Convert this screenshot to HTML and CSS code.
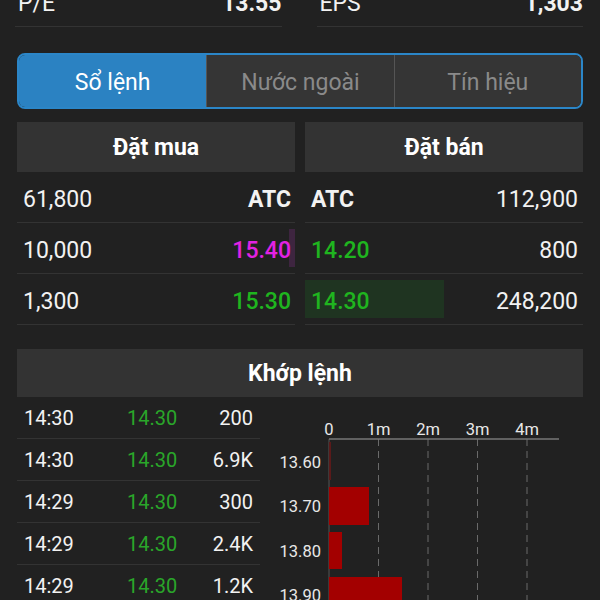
FILE: index.html
```html
<html lang="vi">
<head>
    <meta charset="UTF-8">
    <title>Sổ lệnh</title>
    <link rel="stylesheet" href="styles.css">
</head>

<body>

  <div class="stats">
    <div class="stat"><span>P/E</span><b>13.55</b></div>
    <div class="stat"><span>EPS</span><b>1,303</b></div>
  </div>

  <div class="tabs">
    <div class="tab tab-active">Sổ lệnh</div>
    <div class="tab">Nước ngoài</div>
    <div class="tab">Tín hiệu</div>
  </div>

  <div class="book">
    <div class="side">
      <div class="head">Đặt mua</div>
      <div class="row"><span>61,800</span><b>ATC</b></div>
      <div class="row"><span>10,000</span><span class="price ceil">15.40</span><i class="bar bar-buy" style="width:6px"></i></div>
      <div class="row"><span>1,300</span><span class="price up">15.30</span></div>
    </div>
    <div class="side">
      <div class="head">Đặt bán</div>
      <div class="row"><b>ATC</b><span>112,900</span></div>
      <div class="row"><span class="price up">14.20</span><span>800</span></div>
      <div class="row"><span class="price up">14.30</span><span>248,200</span><i class="bar bar-sell" style="width:139px"></i></div>
    </div>
  </div>

  <div class="head match-head">Khớp lệnh</div>

  <div class="match">
    <div class="ticks">
      <div class="tick"><span>14:30</span><span class="up">14.30</span><span class="vol">200</span></div>
      <div class="tick"><span>14:30</span><span class="up">14.30</span><span class="vol">6.9K</span></div>
      <div class="tick"><span>14:29</span><span class="up">14.30</span><span class="vol">300</span></div>
      <div class="tick"><span>14:29</span><span class="up">14.30</span><span class="vol">2.4K</span></div>
      <div class="tick"><span>14:29</span><span class="up">14.30</span><span class="vol">1.2K</span></div>
    </div>

    <svg class="chart" width="323" height="204" viewBox="0 0 323 204">
      <g class="grid">
        <line x1="69" y1="42" x2="69" y2="204" class="axis-y"/>
        <line x1="118.5" y1="42" x2="118.5" y2="204"/>
        <line x1="168" y1="42" x2="168" y2="204"/>
        <line x1="217.5" y1="42" x2="217.5" y2="204"/>
        <line x1="267" y1="42" x2="267" y2="204"/>
      </g>
      <line x1="69" y1="42" x2="299" y2="42" class="axis"/>
      <g class="xlabels">
        <text x="69" y="38">0</text>
        <text x="118.5" y="38">1m</text>
        <text x="168" y="38">2m</text>
        <text x="217.5" y="38">3m</text>
        <text x="267" y="38">4m</text>
      </g>
      <g class="bars">
        <rect x="69" y="45" width="2" height="38" class="tiny"/>
        <rect x="69" y="90" width="40" height="38"/>
        <rect x="69" y="135" width="13" height="37"/>
        <rect x="69" y="180" width="73" height="38"/>
      </g>
      <g class="ylabels">
        <text x="61" y="71">13.60</text>
        <text x="61" y="115">13.70</text>
        <text x="61" y="160">13.80</text>
        <text x="61" y="204">13.90</text>
      </g>
    </svg>
  </div>

</body>
</html>
```

FILE: styles.css
```css
* {
	box-sizing: border-box;
}
body {
	margin: 0;
	padding: 0 17px;
	background: #212121;
	color: #f2f2f2;
	font-family: Roboto, "Noto Sans", sans-serif;
	overflow: hidden;
}

.stats {
	display: grid;
	grid-template-columns: 1fr 1fr;
	column-gap: 35px;
	margin: -9px 0 0 -2px;
}
.stat {
	display: flex;
	justify-content: space-between;
	font-size: 23px;
	line-height: 26px;
	padding-bottom: 9px;
	border-bottom: 1px solid #333;
}
.stat span {
	padding-left: 3px;
}
.stat b {
	font-weight: 700;
}

.tabs {
	display: grid;
	grid-template-columns: 1fr 1fr 1fr;
	margin-top: 26px;
	height: 56px;
	border: 2px solid #2b86c8;
	border-radius: 8px;
	overflow: hidden;
}
.tab {
	display: flex;
	align-items: center;
	justify-content: center;
	padding-top: 3px;
	background: #353535;
	color: #8a8a8a;
	font-size: 23px;
	border-left: 1px solid #555;
}
.tab-active {
	background: #2b82c2;
	color: #fff;
	border-left: none;
}

.book {
	display: grid;
	grid-template-columns: 1fr 1fr;
	column-gap: 10px;
	margin-top: 13px;
}
.head {
	height: 50px;
	display: flex;
	align-items: center;
	justify-content: center;
	background: #333;
	color: #fff;
	font-size: 23px;
	font-weight: 700;
}
.row {
	position: relative;
	display: flex;
	align-items: center;
	justify-content: space-between;
	height: 51px;
	padding: 4px 4px 0 6px;
	border-bottom: 1px solid #333;
	font-size: 23px;
}
.side + .side .row {
	padding: 4px 5px 0 6px;
}
.row span, .row b {
	position: relative;
	z-index: 1;
}
.row .price {
	font-weight: 500;
}
.bar {
	position: absolute;
	top: 6px;
	bottom: 6px;
}
.bar-buy {
	right: 0;
	background: #3e2540;
}
.bar-sell {
	left: 0;
	background: #1f3421;
}
.up {
	color: #1fb51f;
}
.ceil {
	color: #e322e3;
}

.match-head {
	margin-top: 24px;
	height: 48px;
}
.match {
	display: flex;
}
.ticks {
	width: 243px;
}
.tick {
	display: grid;
	grid-template-columns: 103px 1fr auto;
	align-items: center;
	height: 42px;
	padding: 0 7px;
	border-bottom: 1px solid #333;
	font-size: 20px;
}
.tick .up {
	color: #2aa62a;
}
.chart {
	display: block;
	font-family: Roboto, "Noto Sans", sans-serif;
	font-size: 16.5px;
}
.chart text {
	fill: #e8e8e8;
}
.xlabels text {
	text-anchor: middle;
}
.ylabels text {
	text-anchor: end;
}
.grid line {
	stroke: #6a6a6a;
	stroke-width: 1;
	stroke-dasharray: 7 5;
}
.grid .axis-y {
	stroke-dasharray: none;
	stroke: #555;
}
.axis {
	stroke: #777;
	stroke-width: 1.5;
}
.bars rect {
	fill: #a30000;
}
.bars .tiny {
	fill: #5a1a1a;
}
```
